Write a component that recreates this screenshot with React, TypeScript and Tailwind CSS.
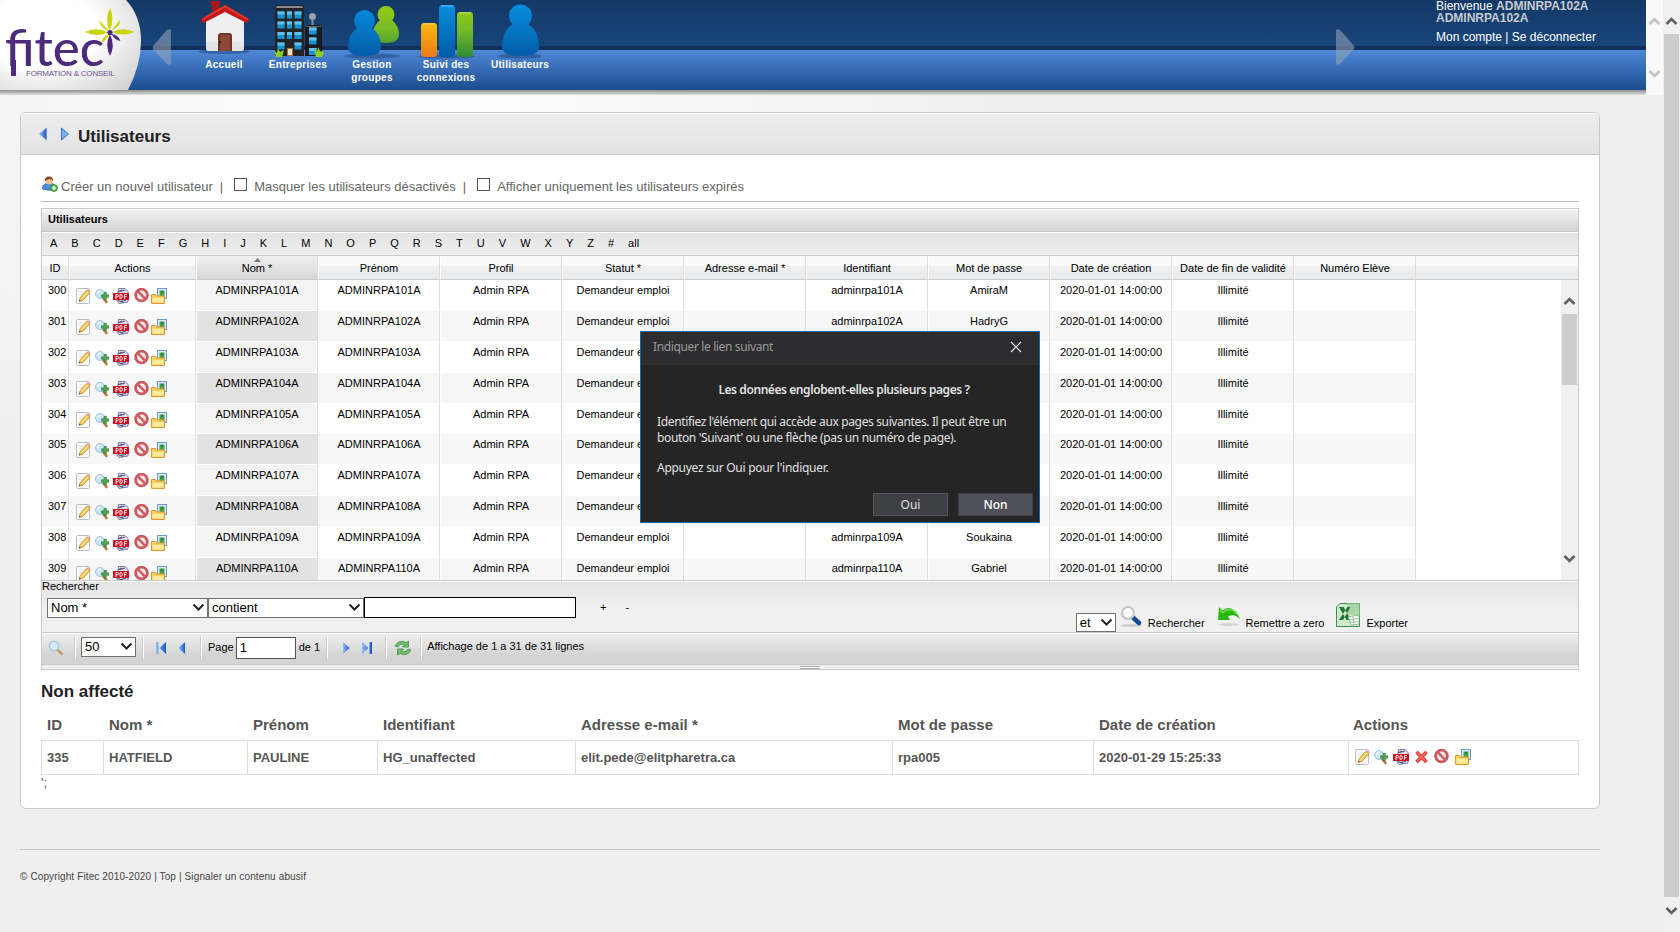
import React from "react";

const sans = "font-['Liberation_Sans',Arial,sans-serif]";

function EditIcon() {
  return (
    <svg width="16" height="16" viewBox="0 0 16 16" className="block shrink-0">
      <rect x="0.5" y="0.5" width="13" height="15" rx="1" fill="#fbfbfb" stroke="#b9bcc0" />
      <path d="M3 4h6M3 6.500h4" stroke="#e3e5e8" />
      <path d="M3.200 13.200 4.200 9.600 11 2.200l2.800 2.500L7 12.200z" fill="#f7cf5b" stroke="#c98a2b" strokeWidth="0.900" />
      <path d="M5.500 11 12.200 3.600" stroke="#fdebb0" strokeWidth="1" />
      <path d="m11 2.200 1-1.100 2.700 2.400-.9 1.200z" fill="#ef9a92" />
      <path d="m3 13.500.5-1.800 1.200 1.100z" fill="#4a3a28" />
    </svg>
  );
}

function ZoomIcon() {
  return (
    <svg width="14" height="16" viewBox="0 0 14 16" className="block shrink-0">
      <path d="m8.500 10.500 3 3.500" stroke="#b5763c" strokeWidth="2.600" strokeLinecap="round" />
      <circle cx="5" cy="6" r="4.500" fill="#c9e4f7" stroke="#9cc3e2" />
      <path d="M2.500 5.500q1-2.500 3.500-2.300" stroke="#fff" strokeWidth="1.200" fill="none" />
      <path d="M6.500 6.800H9V4.300h2.400v2.500h2.400v2.400h-2.400v2.400H9V9.200H6.500z" fill="#4fa554" stroke="#2c7d3a" strokeWidth="0.600" />
    </svg>
  );
}

function PdfIcon() {
  return (
    <svg width="16" height="16" viewBox="0 0 16 16" className="block shrink-0">
      <path d="M5.500.5H12l3 3V14L6 15.500 4 13z" fill="#e0e0ef" stroke="#6d6c95" strokeWidth="0.900" />
      <path d="M5 4 9 2M7 3.500 12 2M7 13.500l6-1M5 12.500l5 2" stroke="#55547c" strokeWidth="1.200" />
      <rect x="0" y="5" width="16" height="7" rx="0.500" fill="#cf1020" />
      <path d="M3 11V6.500h1.300q1.200 0 1.200 1.200T4.300 8.900H3M7 6.500v4h.8q1.500 0 1.500-2T7.800 6.500zM11.500 11V6.500h2.500M11.500 8.600h2" stroke="#fff" strokeWidth="0.900" fill="none" />
    </svg>
  );
}

function BlockIcon() {
  return (
    <svg width="15" height="16" viewBox="0 0 15 16" className="block shrink-0">
      <circle cx="7.500" cy="7" r="5.700" fill="#fbeaea" stroke="#cf5b61" strokeWidth="2.500" />
      <path d="m3.700 3.200 7.600 7.600" stroke="#cf5b61" strokeWidth="2.500" />
      <circle cx="7.500" cy="7" r="6.900" fill="none" stroke="#b03a42" strokeWidth="0.500" />
    </svg>
  );
}

function FolderIcon() {
  return (
    <svg width="16" height="16" viewBox="0 0 16 16" className="block shrink-0">
      <rect x="6.500" y="0.500" width="9" height="10" fill="#dcebf9" stroke="#6d9bc9" />
      <rect x="8.500" y="2.500" width="5" height="5.500" fill="#4aa04c" />
      <circle cx="11" cy="4" r="1.300" fill="#2f7e3b" />
      <path d="M.5 15.500V6.500h4l1 1.500h8v7.500z" fill="#f8d060" stroke="#dc9a2e" />
      <path d="M1.500 14.500V10h11v4.500z" fill="#fdeb9e" />
    </svg>
  );
}

function DeleteIcon() {
  return (
    <svg width="15" height="16" viewBox="0 0 15 16" className="block shrink-0">
      <path d="m2.500 3 10 10M12.500 3l-10 10" stroke="#e03434" strokeWidth="3.600" />
      <path d="m3 3.500 9 9M12 3.500l-9 9" stroke="#f76a68" strokeWidth="1.600" />
    </svg>
  );
}

function Chevron({ up, color = "#606060" }: { up?: boolean; color?: string }) {
  return (
    <svg width="13" height="10" viewBox="0 0 13 10" className="block shrink-0">
      <path d={up ? "M1.500 8 6.500 3l5 5" : "M1.500 2l5 5 5-5"} fill="none" stroke={color} strokeWidth="2.600" />
    </svg>
  );
}

function SelectArrow() {
  return (
    <svg width="13" height="9" viewBox="0 0 13 9" className="block shrink-0">
      <path d="m1.500 1.500 5 5 5-5" fill="none" stroke="#222" strokeWidth="2" />
    </svg>
  );
}

function Logo() {
  return (
    <div className="relative h-[90px] w-[147px] shrink-0">
      <svg width="147" height="90" viewBox="0 0 147 90" className="block">
        <defs>
          <radialGradient id="lg" cx="0.3" cy="0.35" r="0.9">
            <stop offset="0.45" stopColor="#fff" />
            <stop offset="1" stopColor="#cfcfcf" />
          </radialGradient>
        </defs>
        <path d="M0 0h126q15 16 15 41 0 24-13 49H0z" fill="url(#lg)" />
        <g fill="#c9d400">
          <path d="M110 8q-5.500 11-.5 23 5.500-12 .5-23z" />
          <path d="M85 32q11-5.500 23 .5-12 5-23-.5z" />
          <path d="M112 32q11-5.500 22.500 0-11.500 5-22.500 0z" />
          <path d="m99 20 10 11q-8-2-10-11zM120 20q1 6-9 11zM101 43q2-7 8-9-2 6-8 9z" />
        </g>
        <path d="M110 34q-5.500 11 0 22 5.500-10 0-22zM111.500 34q7 1 9 7-6-1-9-7z" fill="#4c2a7c" />
        <circle cx="110" cy="32.500" r="2.600" fill="#4c2a7c" />
        <path d="M11 60h5v16h-5z" fill="#4c2a7c" />
      </svg>
      <div className="absolute left-[5px] top-[25px] origin-left scale-x-[1.020] whitespace-nowrap font-['Lato',sans-serif] text-[50px] font-medium leading-[44px] text-[#4c2a7c]">fitec</div>
      <div className={`absolute left-[26px] top-[69px] whitespace-nowrap text-[8px] leading-[9px] tracking-[-0.200px] text-[#6d5296] ${sans}`}>FORMATION &amp; CONSEIL</div>
    </div>
  );
}

function HouseIcon() {
  return (
    <svg width="54" height="60" viewBox="0 0 54 60" className="block">
      <ellipse cx="27" cy="51.500" rx="26" ry="2.500" fill="#0c2a55" opacity="0.350" />
      <path d="M9 20 28 7l19 13v28q0 3-3 3H12q-3 0-3-3z" fill="#efefef" />
      <path d="M9 42v6q0 3 3 3h32q3 0 3-3v-6z" fill="#dcdcdc" opacity="0.600" />
      <path d="M14 1h9v4h-1v6h-7V5h-1z" fill="#a81616" />
      <path d="M28 5 51 18.500q2 1.500.5 3l-2 1.500L28 12 6.500 23l-2-1.500Q3 20 5 18.500z" fill="#c41818" />
      <path d="M28 5 51 18.500l-1 1.500L28 7.500 6 20l-1-1.500z" fill="#e2382c" />
      <path d="M21 51V36q0-3 3-3h8q3 0 3 3v15z" fill="#6f3226" />
      <path d="M23 51V35h10v16z" fill="#8c4838" />
      <circle cx="23.500" cy="42" r="1" fill="#3a1a12" />
    </svg>
  );
}

function BuildingIcon() {
  const tower = [11.5, 21.5, 32, 42.5];
  return (
    <svg width="54" height="62" viewBox="0 0 54 62" className="block">
      <path d="M4 8q0-3 3-3h23q3 0 3 3v48H4z" fill="#242426" />
      <path d="M5 8q0-2 2-2h23q2 0 2 2z" fill="#8a8c90" />
      <path d="M34 28q0-3 3-3h11q3 0 3 3v28H34z" fill="#1a1a1c" />
      <path d="M35 26.500h15" stroke="#666" />
      <path d="M41.500 18v7" stroke="#8b9099" strokeWidth="2" />
      <circle cx="41.500" cy="16.500" r="3.500" fill="#9aa0aa" />
      {tower.map((y) => (
        <g key={y} fill="#1590d0">
          <rect x="6.500" y={y} width="7" height="7" />
          {y < 42 && <rect x="16" y={y} width="5" height="7" />}
          <rect x="23.500" y={y} width="7" height="7" />
          <path d={`M6.500 ${y}h7v3h-7zM23.500 ${y}h7v3h-7z`} fill="#62c0ee" />
          {y < 42 && <rect x="16" y={y} width="5" height="3" fill="#62c0ee" />}
        </g>
      ))}
      {[27.5, 37.5, 48].map((y) => (
        <g key={y}>
          <rect x="38" y={y} width="7.500" height="7" fill="#1590d0" />
          <rect x="38" y={y} width="7.500" height="3" fill="#62c0ee" />
        </g>
      ))}
      <rect x="16.500" y="48.500" width="5" height="7" fill="#eadfb8" stroke="#9a7a3a" />
      <path d="m3 50 3 3 1-5 2 4 4-2-2 7H5zM43 49l3 3 1-5 2 4 4 1-2 5h-6z" fill="#8ccf27" />
    </svg>
  );
}

function Person({ cx, headY, r, w, bottom, fill }: { cx: number; headY: number; r: number; w: number; bottom: number; fill: string }) {
  const h = w / 2;
  const top = headY + r - 3;
  return (
    <g fill={fill}>
      <circle cx={cx} cy={headY} r={r} />
      <path d={`M${cx - r * 0.7} ${top} Q${cx - h} ${top + 6} ${cx - h} ${bottom - 9} Q${cx - h} ${bottom} ${cx} ${bottom} Q${cx + h} ${bottom} ${cx + h} ${bottom - 9} Q${cx + h} ${top + 6} ${cx + r * 0.7} ${top}z`} />
    </g>
  );
}

function Gradients() {
  return (
    <svg width="0" height="0" className="absolute">
      <defs>
        <linearGradient id="gb" x1="0" y1="0" x2="0" y2="57" gradientUnits="userSpaceOnUse">
          <stop offset="0.1" stopColor="#0a8ddd" />
          <stop offset="1" stopColor="#015ba5" />
        </linearGradient>
        <linearGradient id="gg" x1="0" y1="0" x2="0" y2="57" gradientUnits="userSpaceOnUse">
          <stop offset="0.1" stopColor="#97cb12" />
          <stop offset="0.5" stopColor="#78bd27" />
          <stop offset="1" stopColor="#2f8a35" />
        </linearGradient>
        <linearGradient id="go" x1="0" y1="23" x2="0" y2="57" gradientUnits="userSpaceOnUse">
          <stop offset="0" stopColor="#fbb90a" />
          <stop offset="1" stopColor="#ec7a16" />
        </linearGradient>
        <linearGradient id="pg" x1="0" y1="0" x2="1" y2="0">
          <stop offset="0" stopColor="#8fc0f5" />
          <stop offset="1" stopColor="#1b55c8" />
        </linearGradient>
      </defs>
    </svg>
  );
}

function GroupIcon() {
  return (
    <svg width="58" height="62" viewBox="0 0 58 62" className="block">
      <ellipse cx="29" cy="56" rx="28" ry="2.500" fill="#0c2a55" opacity="0.350" />
      <Person cx={43} headY={14.5} r={8.5} w={26} bottom={43} fill="url(#gg)" />
      <Person cx={21.5} headY={20.5} r={10.5} w={33} bottom={56} fill="url(#gb)" />
    </svg>
  );
}

function ChartIcon() {
  return (
    <svg width="60" height="62" viewBox="0 0 60 62" className="block">
      <ellipse cx="30" cy="56.500" rx="29" ry="2" fill="#0c2a55" opacity="0.350" />
      <rect x="5" y="23" width="16" height="34" rx="3" fill="url(#go)" />
      <rect x="23" y="5" width="16" height="52" rx="3" fill="url(#gb)" />
      <rect x="41" y="12" width="16" height="45" rx="3" fill="url(#gg)" />
      <path d="M7 24h12M25 6h12M43 13h12" stroke="#fff" opacity="0.450" />
    </svg>
  );
}

function UserIcon() {
  return (
    <svg width="46" height="62" viewBox="0 0 46 62" className="block">
      <ellipse cx="23" cy="56" rx="22" ry="2.500" fill="#0c2a55" opacity="0.350" />
      <Person cx={23.5} headY={16} r={11.5} w={37} bottom={56} fill="url(#gb)" />
    </svg>
  );
}

const navItems: { icon: React.ReactNode; lines: string[] }[] = [
  { icon: <HouseIcon />, lines: ["Accueil"] },
  { icon: <BuildingIcon />, lines: ["Entreprises"] },
  { icon: <GroupIcon />, lines: ["Gestion", "groupes"] },
  { icon: <ChartIcon />, lines: ["Suivi des", "connexions"] },
  { icon: <UserIcon />, lines: ["Utilisateurs"] },
];

function Header() {
  return (
    <div className="flex h-[95px]">
      <div className="flex w-[1646px] flex-col">
        <div className="flex h-[90px] bg-[linear-gradient(180deg,#133966_0,#19457b_46px,#12305a_46px,#12305a_50px,#4f88d8_50px,#1b4c8c_90px)]">
          <Logo />
          <svg width="40" height="90" viewBox="0 0 40 90" className="block shrink-0">
            <path d="M24 30v34q-3 2-6-2L6 49q-1-2 0-3l12-14q3-4 6-2z" fill="#9aa7b8" opacity="0.550" />
          </svg>
          <div className="flex">
            {navItems.map((n) => (
              <div key={n.lines[0]} className="flex w-[74px] flex-col items-center">
                <div className="flex h-[58px] items-start justify-center overflow-visible">{n.icon}</div>
                <div className={`text-center text-[10px] font-bold leading-[13px] tracking-[0.300px] text-white ${sans}`}>
                  {n.lines.map((l) => (
                    <div key={l} className="relative whitespace-nowrap">{l}</div>
                  ))}
                </div>
              </div>
            ))}
          </div>
          <div className="flex flex-1 justify-end pr-[77px]">
            <svg width="24" height="90" viewBox="0 0 24 90" className="block shrink-0">
              <path d="M1 30v34q3 2 6-2l12-13q1-2 0-3L7 32q-3-4-6-2z" fill="#9aa7b8" opacity="0.550" />
            </svg>
          </div>
          <div className={`w-[210px] text-[12px] leading-[12px] text-white ${sans}`}>
            <div className="whitespace-nowrap">Bienvenue <b className="text-[#c6cad0]">ADMINRPA102A</b></div>
            <div className="font-bold text-[#c6cad0]">ADMINRPA102A</div>
            <div className="whitespace-nowrap pt-[7px]">Mon compte | Se déconnecter</div>
          </div>
        </div>
        <div className="h-[5px] bg-[linear-gradient(180deg,#8f8f8f,#e0e0e0)]" />
      </div>
      <div className="flex w-[17px] flex-col items-center justify-between bg-[#f9f9f9] pb-[16px] pt-[16px]">
        <Chevron up color="#c2c2c2" />
        <Chevron color="#c2c2c2" />
      </div>
    </div>
  );
}

const letters = [..."ABCDEFGHIJKLMNOPQRSTUVWXYZ#", "all"];
const columns = ["Nom *", "Prénom", "Profil", "Statut *", "Adresse e-mail *", "Identifiant", "Mot de passe", "Date de création", "Date de fin de validité", "Numéro Elève"];
const passwords = ["AmiraM", "HadryG", "", "", "", "", "", "", "Soukaina", "Gabriel"];
const rows = passwords.map((p, i) => {
  const n = 101 + i;
  return { id: String(300 + i), cells: [`ADMINRPA${n}A`, `ADMINRPA${n}A`, "Admin RPA", "Demandeur emploi", "", i < 2 || i > 7 ? `adminrpa${n}A` : "", p, "2020-01-01 14:00:00", "Illimité", ""] };
});

function ColumnHeader({ label, sorted }: { label: string; sorted?: boolean }) {
  return (
    <div className={`relative flex w-[122px] shrink-0 items-center justify-center border-b border-l border-r border-b-[#ccc] border-l-white border-r-[#ddd] pt-px ${sorted ? "bg-[linear-gradient(180deg,#f0f0f0,#d6d6d6)]" : "bg-[linear-gradient(180deg,#fafafa_42%,#eef0f2_42%,#e9ebed)]"}`}>
      {sorted && (
        <svg width="7" height="4" viewBox="0 0 7 4" className="absolute left-[57px] top-[2px]">
          <path d="M0 4 3.500 0 7 4z" fill="#777" />
        </svg>
      )}
      {label}
    </div>
  );
}

function Grid() {
  return (
    <div className={`flex h-[462px] flex-col border border-[#c8c8c8] text-[11px] text-black ${sans}`}>
      <div className="flex h-[23px] shrink-0 items-center border-b border-t border-b-[#c8c8c8] border-t-white bg-[linear-gradient(180deg,#f2f2f2,#d4d4d4)] pb-[2px] pl-[6px] font-bold">Utilisateurs</div>
      <div className="flex h-[24px] shrink-0 items-center gap-[14px] border-b border-t border-b-[#ccc] border-t-white bg-[linear-gradient(180deg,#e4e4e4,#efefef)] pb-[2px] pl-[8px]">
        {letters.map((l) => (
          <span key={l}>{l}</span>
        ))}
      </div>
      <div className="flex h-[24px] shrink-0">
        <div className="flex w-[27px] shrink-0 items-center justify-center border-b border-r border-b-[#ccc] border-r-[#ddd] bg-[linear-gradient(180deg,#fafafa_42%,#eef0f2_42%,#e9ebed)] pt-px">ID</div>
        <div className="flex w-[127px] shrink-0 items-center justify-center border-b border-l border-r border-b-[#ccc] border-l-white border-r-[#ddd] bg-[linear-gradient(180deg,#fafafa_42%,#eef0f2_42%,#e9ebed)] pt-px">Actions</div>
        {columns.map((c, i) => (
          <ColumnHeader key={c} label={c} sorted={i === 0} />
        ))}
        <div className="flex-1 border-b border-b-[#ccc] bg-[linear-gradient(180deg,#fafafa_42%,#eef0f2_42%,#e9ebed)]" />
      </div>
      <div className="flex h-[301px] shrink-0 overflow-hidden border-b border-[#c8c8c8] bg-white">
        <div className="flex-1">
          {rows.map((r, i) => (
            <div key={r.id} className="flex h-[30.880px]">
              <div className={`w-[27px] shrink-0 border-b border-r border-b-white border-r-[#ddd] pl-[6px] pt-[4px] leading-[13px] ${i % 2 ? "bg-[#f7f7f7]" : "bg-white"}`}>{r.id}</div>
              <div className={`flex w-[127px] shrink-0 border-b border-l border-r border-b-white border-l-white border-r-[#ddd] pl-[6px] pt-[8px] ${i % 2 ? "bg-[#f7f7f7]" : "bg-white"}`}>
                <EditIcon />
                <div className="w-[3px]" />
                <ZoomIcon />
                <div className="w-[4px]" />
                <PdfIcon />
                <div className="w-[5px]" />
                <BlockIcon />
                <div className="w-[2px]" />
                <FolderIcon />
              </div>
              {r.cells.map((c, j) => (
                <div key={j} className={`w-[122px] shrink-0 whitespace-nowrap border-b border-l border-r border-b-white border-l-white border-r-[#ddd] pt-[4px] text-center leading-[13px] ${j === 0 ? (i % 2 ? "bg-[#e2e2e2]" : "bg-[#f3f3f3]") : i % 2 ? "bg-[#f7f7f7]" : "bg-white"}`}>{c}</div>
              ))}
            </div>
          ))}
        </div>
        <div className="flex w-[17px] shrink-0 flex-col items-center bg-[#f0f0f0] pt-[16px]">
          <Chevron up />
          <div className="mt-[8px] h-[71px] w-[15px] bg-[#cdcdcd]" />
          <div className="mt-[169px]">
            <Chevron />
          </div>
        </div>
      </div>
      <SearchBar />
      <Pager />
      <div className="flex flex-1 items-center justify-center border-t border-[#c8c8c8] bg-[#efefef]">
        <div className="h-[3px] w-[20px] border-y border-[#aaa] bg-white" />
      </div>
    </div>
  );
}

function SearchBar() {
  return (
    <div className="flex h-[52px] shrink-0 justify-between border-b border-t border-b-[#c8c8c8] border-t-white bg-[linear-gradient(180deg,#e4e4e4,#f0f0f0_50%)]">
      <div>
        <div className="h-[15px] leading-[9px]">Rechercher</div>
        <div className="flex items-center pl-[5px]">
          <div className="flex h-[20px] w-[161px] items-center justify-between border border-[#707070] bg-white pl-[3px] pr-[2px] text-[13px]">Nom *<SelectArrow /></div>
          <div className="flex h-[20px] w-[156px] items-center justify-between border border-[#707070] bg-white pl-[3px] pr-[2px] text-[13px]">contient<SelectArrow /></div>
          <div className="h-[21px] w-[212px] border border-black bg-white" />
          <span className="ml-[24px]">+</span>
          <span className="ml-[19px]">-</span>
        </div>
      </div>
      <div className="flex items-end pr-[170px]">
        <div className="flex h-[19px] w-[40px] items-center justify-between border border-[#707070] bg-white pl-[3px] pr-[2px] text-[13px]">et<SelectArrow /></div>
        <svg width="24" height="24" viewBox="0 0 24 24" className="mb-[4px] ml-[4px] block">
          <ellipse cx="11" cy="21.500" rx="11" ry="1.500" fill="#ccc" />
          <path d="m13.500 14 5.500 5" stroke="#174a94" strokeWidth="4.500" strokeLinecap="round" />
          <circle cx="8" cy="9" r="6" fill="#f7f7f7" stroke="#c4c4c4" strokeWidth="2" />
        </svg>
        <span className="ml-[4px] pb-px">Rechercher</span>
        <svg width="24" height="24" viewBox="0 0 24 24" className="mb-[4px] ml-[12px] block">
          <ellipse cx="12" cy="20.500" rx="10" ry="1.500" fill="#ccd6cc" />
          <path d="M1 16 2 3l3.500 3.500Q16-1 23 15q-6-6-12-2.500L13 16z" fill="#28b80c" />
          <path d="M3 6.500 5.500 8.500Q14 2 20 10" stroke="#7be05a" fill="none" strokeWidth="1.500" />
        </svg>
        <span className="ml-[5px] pb-px">Remettre a zero</span>
        <svg width="24" height="24" viewBox="0 0 24 24" className="mb-[5px] ml-[12px] block">
          <path d="M4 .5h19.500v23H.5V4z" fill="#cfe8cf" stroke="#3d8f4d" />
          <path d="M11 .5h12.500V13L11 11z" fill="#a9d6a9" />
          <path d="M3 4h4.500L15 17h-4.500zM14.500 4h-3L3 17h4z" fill="#1f7430" />
          <path d="m12 14 11-2v9l-8 1z" fill="#fff" stroke="#7fb587" strokeWidth="0.800" />
          <path d="m13 17 9-1.500M13.500 19.500l8.500-1M17 13.500l1 8" stroke="#7fb587" strokeWidth="0.800" />
        </svg>
        <span className="ml-[6px] pb-px">Exporter</span>
      </div>
    </div>
  );
}

function Sep({ className }: { className: string }) {
  return <div className={`h-[22px] w-[2px] border-l border-[#ccc] bg-white ${className}`} />;
}

function Pager() {
  return (
    <div className="flex h-[31px] shrink-0 items-center border-t border-white bg-[linear-gradient(180deg,#efefef,#d4d4d4_70%)] pb-[3px] pl-[6px]">
      <svg width="16" height="16" viewBox="0 0 16 16" className="block">
        <path d="m9.500 10 4.500 4" stroke="#c79a6c" strokeWidth="2.400" strokeLinecap="round" />
        <circle cx="6" cy="6" r="4.800" fill="#d5e9fa" stroke="#9fc2e8" strokeWidth="1.200" />
      </svg>
      <Sep className="ml-[10px]" />
      <div className="mb-[2px] ml-[5px] flex h-[20px] w-[55px] items-center justify-between border border-[#707070] bg-white pl-[3px] pr-[2px] text-[13px]">50<SelectArrow /></div>
      <Sep className="ml-[6px]" />
      <svg width="12" height="14" viewBox="0 0 12 14" className="ml-[11px] block">
        <path d="M1 1h2.500v12H1zM11 1v12L4.500 7z" fill="url(#pg)" />
      </svg>
      <svg width="8" height="14" viewBox="0 0 8 14" className="ml-[11px] block">
        <path d="M7 1v12L.5 7z" fill="url(#pg)" />
      </svg>
      <Sep className="ml-[14px]" />
      <span className="ml-[6px]">Page</span>
      <div className="ml-[2px] h-[22px] w-[60px] border border-[#555] bg-white pl-[3px] text-[13px] leading-[19px]">1</div>
      <span className="ml-[3px]">de 1</span>
      <Sep className="ml-[6px]" />
      <svg width="8" height="14" viewBox="0 0 8 14" className="ml-[14px] block">
        <path d="M1 1v12l6.500-6z" fill="url(#pg)" />
      </svg>
      <svg width="12" height="14" viewBox="0 0 12 14" className="ml-[11px] block">
        <path d="M8.500 1H11v12H8.500zM1 1v12l6.500-6z" fill="url(#pg)" />
      </svg>
      <Sep className="ml-[12px]" />
      <svg width="18" height="16" viewBox="0 0 18 16" className="ml-[7px] block">
        <path d="M1 6Q5-1 12 2.500L14.500 1v6H8.500L10.500 5Q6 3 4 7zM17 10q-4 7-11 3.500L3.500 15V9h6l-2 2q4.500 2 6.500-2z" fill="#6fbf68" stroke="#3f8f45" strokeWidth="0.800" />
      </svg>
      <Sep className="ml-[8px]" />
      <span className="mb-[2px] ml-[5px]">Affichage de 1 a 31 de 31 lignes</span>
    </div>
  );
}

const unassigned = [
  { head: "ID", value: "335", w: "w-[62px]" },
  { head: "Nom *", value: "HATFIELD", w: "w-[144px]" },
  { head: "Prénom", value: "PAULINE", w: "w-[130px]" },
  { head: "Identifiant", value: "HG_unaffected", w: "w-[198px]" },
  { head: "Adresse e-mail *", value: "elit.pede@elitpharetra.ca", w: "w-[317px]" },
  { head: "Mot de passe", value: "rpa005", w: "w-[201px]" },
  { head: "Date de création", value: "2020-01-29 15:25:33", w: "w-[255px]" },
];

function Unassigned() {
  return (
    <div className="text-[#555]">
      <h2 className="pt-[12px] text-[17px] font-bold leading-[20px] text-[#222]">Non affecté</h2>
      <div className="flex pb-[6px] pl-px pt-[13px] text-[15px] font-bold leading-[19px]">
        {unassigned.map((c) => (
          <div key={c.head} className={`shrink-0 pl-[5px] ${c.w}`}>{c.head}</div>
        ))}
        <div className="pl-[4px]">Actions</div>
      </div>
      <div className="flex h-[35px] items-center border border-[#ddd] text-[13px] font-bold">
        {unassigned.map((c) => (
          <div key={c.head} className={`flex h-full shrink-0 items-center border-r border-[#ddd] pl-[5px] ${c.w}`}>{c.value}</div>
        ))}
        <div className="flex h-[18px] pl-[6px]">
          <EditIcon />
          <div className="w-[3px]" />
          <ZoomIcon />
          <div className="w-[5px]" />
          <PdfIcon />
          <div className="w-[5px]" />
          <DeleteIcon />
          <div className="w-[5px]" />
          <BlockIcon />
          <div className="w-[6px]" />
          <FolderIcon />
        </div>
      </div>
      <div className="text-[13px] leading-[15px]">';</div>
    </div>
  );
}

function Dialog() {
  return (
    <div className="absolute left-[640px] top-[331px] flex h-[192px] w-[400px] flex-col border border-[#1668a8] bg-[#252526] font-['Noto_Sans','Open_Sans',sans-serif] text-[12px] text-[#e0e0e0]">
      <div className="flex h-[33px] items-center justify-between bg-[#2d2d30] pb-[3px] pl-[12px] pr-[17px] text-[#999]">
        <span className="whitespace-nowrap tracking-[-0.370px]">Indiquer le lien suivant</span>
        <svg width="12" height="12" viewBox="0 0 12 12" className="block">
          <path d="m1 1 10 10M11 1 1 11" stroke="#e6e6e6" strokeWidth="1.200" />
        </svg>
      </div>
      <div className="px-[16px] pt-[17px] leading-[16px]">
        <div className="pl-[8px] text-center font-semibold tracking-[-0.420px]">Les données englobent-elles plusieurs pages ?</div>
        <div className="whitespace-nowrap pt-[16px] tracking-[-0.360px]">
          <div>Identifiez l'élément qui accède aux pages suivantes. Il peut être un</div>
          <div>bouton 'Suivant' ou une flèche (pas un numéro de page).</div>
        </div>
        <div className="whitespace-nowrap pt-[14px] tracking-[-0.280px]">Appuyez sur Oui pour l'indiquer.</div>
      </div>
      <div className="mt-[17px] flex justify-end gap-[10px] pr-[6px]">
        <div className="flex h-[23px] w-[75px] items-center justify-center border border-[#555558] bg-[#3f3f46]">Oui</div>
        <div className="flex h-[23px] w-[75px] items-center justify-center border border-[#3f3f46] bg-[#50505a] font-medium text-white">Non</div>
      </div>
    </div>
  );
}

export default function App() {
  return (
    <div className={`relative flex h-[932px] w-[1680px] overflow-hidden bg-[#efefef] ${sans}`}>
      <Gradients />
      <div className="w-[1663px] shrink-0 bg-[radial-gradient(ellipse_620px_420px_at_400px_120px,#ffffff_0,#efefef_100%)]">
        <Header />
        <div className="ml-[20px] mt-[17px] h-[697px] w-[1580px] rounded-[6px] border border-[#c8c8c8] bg-white">
          <div className="flex h-[42px] items-center rounded-t-[5px] border-b border-t border-b-[#c8c8c8] border-t-white bg-[linear-gradient(180deg,#eeeeee,#e3e3e3)] pl-[18px] pt-[4px]">
            <svg width="8" height="14" viewBox="0 0 8 14" className="-mt-[4px] block">
              <path d="M7.500 1v12L.5 7z" fill="url(#pg)" stroke="#4a86d8" strokeWidth="0.500" />
            </svg>
            <svg width="8" height="14" viewBox="0 0 8 14" className="-mt-[4px] ml-[14px] block">
              <path d="M.5 1v12l7-6z" fill="#7fb0f0" stroke="#2a66d0" strokeWidth="0.900" />
            </svg>
            <h1 className="ml-[9px] pt-px text-[17px] font-bold text-[#222]">Utilisateurs</h1>
          </div>
          <div className="px-[20px]">
            <div className="flex h-[47px] items-center border-b border-[#b8b8b8] pt-[18px] text-[13px] text-[#666]">
              <svg width="16" height="16" viewBox="0 0 16 16" className="-mt-[7px] ml-px block">
                <path d="M.5 13q0-5 4-5.500h5q4 .5 4 5.500-6 2.500-13 0z" fill="#4a8fdd" stroke="#2a62ac" strokeWidth="0.800" />
                <circle cx="7" cy="5" r="3.600" fill="#f6c08c" />
                <path d="M3 5Q2.500.5 7 .5T11 5Q9 2.500 7 3.300T3 5z" fill="#8a4a1c" />
                <circle cx="12" cy="12" r="3.500" fill="#5cb84a" stroke="#2f7f2a" strokeWidth="0.700" />
                <path d="M12 10v4M10 12h4" stroke="#fff" strokeWidth="1.200" />
              </svg>
              <span className="ml-[3px]">Créer un nouvel utilisateur</span>
              <span className="ml-[7px]">|</span>
              <span className="-mt-[6px] ml-[11px] h-[13px] w-[13px] border border-[#555] bg-white" />
              <span className="ml-[7px]">Masquer les utilisateurs désactivés</span>
              <span className="ml-[7px]">|</span>
              <span className="-mt-[6px] ml-[11px] h-[13px] w-[13px] border border-[#555] bg-white" />
              <span className="ml-[7px]">Afficher uniquement les utilisateurs expirés</span>
            </div>
            <div className="h-[6px]" />
            <Grid />
            <Unassigned />
          </div>
        </div>
        <div className="ml-[20px] mt-[40px] w-[1580px] border-t border-[#c8c8c8] pt-[21px] text-[10px] leading-[12px] tracking-[0.120px] text-[#444]">© Copyright Fitec 2010-2020 | Top | Signaler un contenu abusif</div>
      </div>
      <div className="flex w-[17px] flex-col items-center bg-[#f0f0f0] pt-[16px]">
        <Chevron up />
        <div className="mt-[8px] h-[863px] w-[15px] bg-[#cdcdcd]" />
        <div className="mt-[9px]">
          <Chevron />
        </div>
      </div>
      <Dialog />
    </div>
  );
}
